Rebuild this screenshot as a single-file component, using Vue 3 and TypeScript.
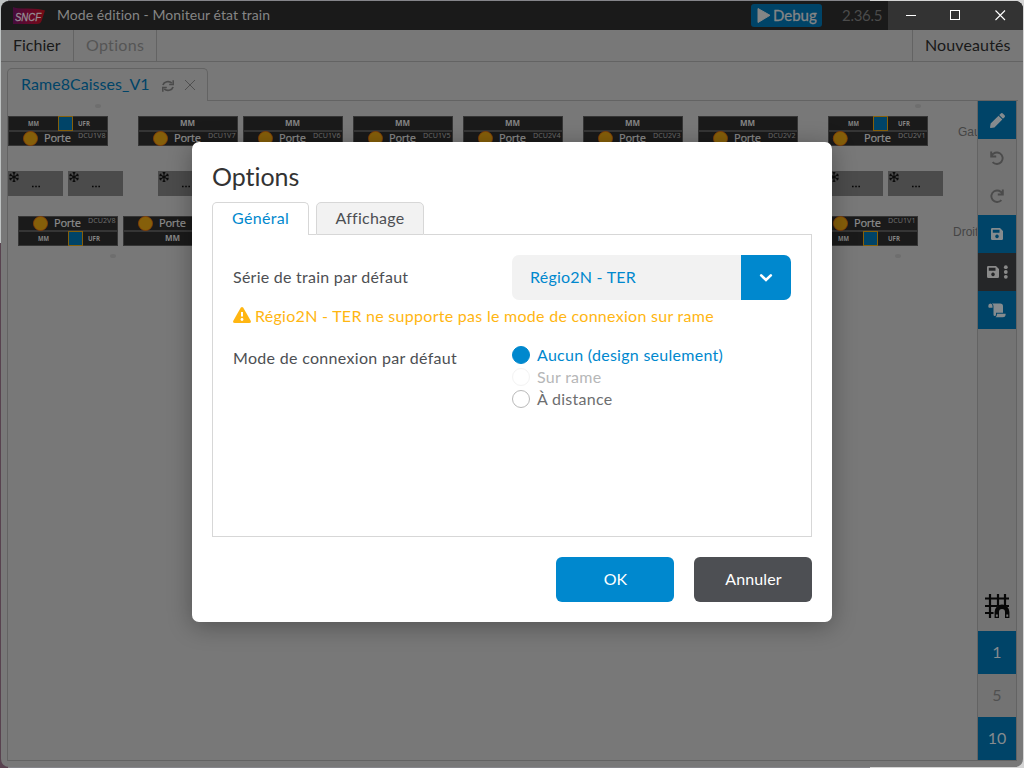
<script setup lang="ts">
import { ref } from 'vue'

interface Door { x: number; dcu: string; ufr?: boolean; bottom?: boolean; lamp?: number; box?: number }

const doors: Door[] = [
  { x: 8, dcu: 'DCU1V8', ufr: true },
  { x: 138, dcu: 'DCU1V7' },
  { x: 243, dcu: 'DCU1V6' },
  { x: 353, dcu: 'DCU1V5' },
  { x: 463, dcu: 'DCU2V4' },
  { x: 583, dcu: 'DCU2V3' },
  { x: 698, dcu: 'DCU2V2' },
  { x: 828, dcu: 'DCU2V1', ufr: true, lamp: 12.3, box: 45 },
  { x: 18, dcu: 'DCU2V8', ufr: true, bottom: true },
  { x: 123, dcu: 'DCU2V7', bottom: true },
  { x: 818, dcu: 'DCU1V1', ufr: true, bottom: true, box: 45 },
]
const coolers: number[] = [8, 68, 158, 828, 888]
const handles = [[98, 106], [918, 106], [113, 256], [898, 256]]
const modes = [
  { id: 'none', label: 'Aucun (design seulement)', disabled: false },
  { id: 'train', label: 'Sur rame', disabled: true },
  { id: 'remote', label: 'À distance', disabled: false },
]
const mode = ref('none')
</script>

<template>
  <div class="desktop">
    <div class="window">
      <header class="titlebar">
        <svg class="logo" width="32" height="17" viewBox="0 0 32 17">
          <defs>
            <linearGradient id="brand" x1="0" x2="1"><stop offset="0" stop-color="#450c3c" /><stop offset=".5" stop-color="#65082a" /><stop offset="1" stop-color="#740b12" /></linearGradient>
          </defs>
          <path d="M0 0 Q3 1.5 14 1.5 Q27 1.5 32 3.5 L28.5 14 Q27.5 17 24 17 L0 17Z" fill="url(#brand)" />
          <text x="2" y="14" textLength="26" lengthAdjust="spacingAndGlyphs" class="logo-text">SNCF</text>
        </svg>
        <span class="title">Mode édition - Moniteur état train</span>
        <span class="debug"><svg width="13" height="15" viewBox="0 0 13 15"><path d="M1 0.5L13 7.3L1 14.5Z" fill="#858585" stroke="#858585" stroke-linejoin="round" /></svg><span>Debug</span></span>
        <span class="version">2.36.5</span>
        <div class="controls">
          <svg width="134" height="29" viewBox="0 0 134 29" fill="none" stroke="#fff"><path d="M17 14.5H27" /><rect x="61.500" y="9.500" width="9" height="9" /><path d="M106.500 9.500L116 19M116 9.500L106.500 19" stroke-width="1.100" /></svg>
        </div>
      </header>
      <nav class="menu">
        <span class="m-file">Fichier</span><span class="m-opt">Options</span><span class="m-new">Nouveautés</span>
      </nav>
      <div class="tabs">
        <div class="tab">
          <span class="tab-name">Rame8Caisses_V1</span>
          <svg class="sync" width="12" height="12" viewBox="0 0 12 12" fill="none" stroke="#4a4a4a" stroke-width="1.700"><path d="M.9 5A5.200 4.600 0 0 1 9.800 3.200M11.100 7A5.200 4.600 0 0 1 2.200 8.800" /><path d="M11.200 .3V4.400H7.200M.8 11.700V7.600H4.800" stroke-width="1.500" /></svg>
          <svg class="close" width="12" height="12" viewBox="0 0 12 12" stroke="#505050"><path d="M1 1L11 11M11 1L1 11" /></svg>
        </div>
        <div class="tab-rest"></div>
      </div>
      <main class="workspace">
        <div class="canvas">
          <svg width="969" height="659" viewBox="8 101 969 659">
            <ellipse v-for="h in handles" :key="h.join()" :cx="h[0]" :cy="h[1]" rx="3" ry="2" fill="#6e6e6e" />
            <g v-for="d in doors" :key="d.dcu" :transform="`translate(${d.x} ${d.bottom ? 216 : 116})`">
              <rect x=".5" y=".5" width="99" height="29" class="unit" />
              <path d="M0 15H100" class="divider" />
              <g :transform="`translate(0 ${d.bottom ? 15 : 0})`">
                <template v-if="d.ufr">
                  <text x="20" y="10" textLength="11" lengthAdjust="spacingAndGlyphs" class="tag small">MM</text>
                  <rect :x="(d.box ?? 50) + .5" y=".5" width="14" height="14" class="ufr" />
                  <text x="70" y="10" textLength="12" lengthAdjust="spacingAndGlyphs" class="tag small">UFR</text>
                </template>
                <text v-else x="42" y="10.300" textLength="15" class="tag">MM</text>
              </g>
              <g :transform="`translate(0 ${d.bottom ? 0 : 15})`">
                <circle :cx="d.lamp ?? 22.5" cy="7.500" r="7" class="lamp" />
                <text x="36" y="11.300" textLength="27" class="door">Porte</text>
                <text x="70" y="7" textLength="27.500" class="dcu">{{ d.dcu }}</text>
              </g>
            </g>
            <g v-for="x in coolers" :key="x" :transform="`translate(${x} 171)`">
              <rect width="55" height="25" fill="#4b4b4b" />
              <g stroke="#0c0c0c" stroke-width="1.150" fill="none" transform="translate(6 6)">
                <g v-for="a in [0, 60, 120]" :key="a" :transform="`rotate(${a})`"><path d="M0 -5V5M-1.300 -4.600L0 -3.300L1.300 -4.600M-1.300 4.600L0 3.300L1.300 4.600" /></g>
              </g>
              <path d="M24 15.500h1.600M27.200 15.500h1.600M30.400 15.500h1.600" stroke="#080808" stroke-width="1.500" />
            </g>
            <text x="958" y="136" class="side">Gauche</text>
            <text x="953" y="236" class="side">Droite</text>
          </svg>
        </div>
        <aside class="toolbar">
          <div class="tool blue"><svg width="15" height="15" viewBox="0 0 512 512" fill="#858b8e"><path d="M498 142l-47 47c-5 5-12 5-17 0L323 78c-5-5-5-12 0-17l47-47c19-19 49-19 68 0l60 60c19 19 19 49 0 68zM283 101L22 362 1 484c-3 16 12 31 28 28l122-21 261-261c5-5 5-12 0-17L300 101c-5-5-12-5-17 0z" /></svg></div>
          <div class="tool"><svg width="14" height="14" viewBox="0 0 14 14" fill="none" stroke="#4b4b4b" stroke-width="1.900"><path d="M1.200 .5V5.500H6.200M1.500 5A5.800 5.800 0 1 1 2.600 11.200" /></svg></div>
          <div class="tool"><svg width="14" height="14" viewBox="0 0 14 14" fill="none" stroke="#4b4b4b" stroke-width="1.900"><path d="M12.800 .5V5.500H7.800M12.500 5A5.800 5.800 0 1 0 11.400 11.200" /></svg></div>
          <div class="tool blue"><svg width="12" height="12" viewBox="0 0 12 12"><path d="M1.300 0H9L12 3V10.700Q12 12 10.700 12H1.300Q0 12 0 10.700V1.300Q0 0 1.300 0ZM1.800 1.800V4.800H8.500V1.800ZM6 6.600A1.800 1.800 0 1 0 6.010 6.600Z" fill="#858b8e" fill-rule="evenodd" /></svg></div>
          <div class="tool dark"><svg width="21" height="14" viewBox="0 0 21 14"><path transform="translate(0 1)" d="M1.300 0H9L12 3V10.700Q12 12 10.700 12H1.300Q0 12 0 10.700V1.300Q0 0 1.300 0ZM1.800 1.800V4.800H8.500V1.800ZM6 6.600A1.800 1.800 0 1 0 6.010 6.600Z" fill="#8a8a8a" fill-rule="evenodd" /><g fill="#8a8a8a"><circle cx="18.800" cy="2.200" r="1.900" /><circle cx="18.800" cy="7" r="1.900" /><circle cx="18.800" cy="11.800" r="1.900" /></g></svg></div>
          <div class="tool blue"><svg width="18" height="15" viewBox="0 0 18 15" fill="#858b8e"><path d="M2.300 .5Q4.500 .5 4.500 3V4.800H1Q.3 4.800 .3 3Q.3 .5 2.300 .5ZM3.800 .5H12.200Q15 .5 15 3.300V9.800H8V11.500Q8 13 6.700 13Q5.500 13 5.500 11.500V3Q5.500 1.200 3.800 .5ZM9 10.800H17.700Q17.700 14.300 14.800 14.300H7.500Q9 13.300 9 10.800Z" /></svg></div>
          <div class="spacer"></div>
          <div class="grid-tool"><svg width="26" height="26" viewBox="0 0 26 26" fill="none" stroke="#070707"><path d="M6 1V25M14 1V12M21 1V12M1 5.500H25M1 13H25M1 20H11" stroke-width="2.200" /><path d="M12.800 24.500V19A5.700 5.700 0 0 1 23.200 19V24.500" stroke="#737373" stroke-width="6.500" /><path d="M12.800 25V19A5.200 5.200 0 0 1 23.200 19V25" stroke-width="4.400" /><path d="M11.900 22.700h1.900M22.300 22.700h1.900" stroke="#737373" stroke-width="2.200" /></svg></div>
          <div class="step blue">1</div><div class="step">5</div><div class="step blue">10</div>
        </aside>
      </main>
    </div>

    <section class="modal" role="dialog">
      <h1><span>Options</span></h1>
      <div class="mtabs">
        <button class="mtab active"><span>Général</span></button>
        <button class="mtab second"><span>Affichage</span></button>
        <div class="mrest"></div>
      </div>
      <div class="panel">
        <div class="row">
          <label class="l-serie">Série de train par défaut</label>
          <div class="select"><span class="value">Régio2N - TER</span><span class="arrow"><svg width="14" height="10" viewBox="0 0 14 10" fill="none" stroke="#fff" stroke-width="2.600" stroke-linecap="round"><path d="M2.200 2.400L7 7L11.800 2.400" /></svg></span></div>
        </div>
        <p class="warn"><svg width="18" height="16" viewBox="0 0 18 16"><path d="M7.700 .8Q9 -.8 10.300 .8L17.700 13.700Q18.500 16 16.200 16H1.800Q-.5 16 .3 13.700Z" fill="#ffb612" /><path d="M9 5V9.600" stroke="#fff" stroke-width="2" /><circle cx="9" cy="12.500" r="1.400" fill="#fff" /></svg><span>Régio2N - TER ne supporte pas le mode de connexion sur rame</span></p>
        <div class="row mode-row">
          <label class="l-mode">Mode de connexion par défaut</label>
          <div class="radios">
            <div v-for="m in modes" :key="m.id" class="radio" :class="[m.id, { checked: mode === m.id, disabled: m.disabled }]" @click="!m.disabled && (mode = m.id)">
              <i></i><span>{{ m.label }}</span>
            </div>
          </div>
        </div>
      </div>
      <footer><button class="ok">OK</button><button class="cancel">Annuler</button></footer>
    </section>
  </div>
</template>

<style>
body { margin: 0; overflow: hidden; }
</style>
<style scoped>
* { box-sizing: border-box; }
.desktop { width: 1024px; height: 768px; position: relative; overflow: hidden; padding: 1px; font-family: Lato, "Open Sans", sans-serif; font-size: 16px; background: linear-gradient(90deg, transparent 8px, #85858a 8px 870px, #d5d5d5 870px), linear-gradient(#bfc3c3 0 243px, #58424f 243px); }
.window { width: 1022px; height: 766px; background: #787878; border-radius: 8px; overflow: hidden; display: flex; flex-direction: column; }
.titlebar { height: 29px; background: #1a1a1a; display: flex; align-items: center; flex: none; color: #858585; }
.logo { margin-left: 12px; flex: none; }
.logo-text { font: italic 11.5px "Liberation Sans", sans-serif; fill: #969096; stroke: #969096; stroke-width: .3; }
.title { margin-left: 12px; width: 214px; font-size: 14px; letter-spacing: .06px; white-space: nowrap; padding-bottom: 2px; }
.debug { margin-left: 479px; width: 71px; height: 23px; background: #004468; border-radius: 3px; display: flex; align-items: center; padding-left: 6px; gap: 3px; font-size: 15px; flex: none; transform: translateX(1px); }
.debug span { padding-bottom: 2px; -webkit-text-stroke: .3px #858585; }
.version { width: 66px; padding: 0 0 2px 21px; color: #4b4b4b; font-size: 15px; letter-spacing: -.3px; flex: none; }
.controls { width: 135px; height: 29px; background: #333; margin-left: auto; padding-left: 1px; }
.controls svg { display: block; }
.menu { height: 32px; flex: none; border-bottom: 1px solid #636363; display: flex; line-height: 30px; color: #191919; }
.m-file { width: 73px; padding-left: 12px; border-right: 1px solid #636363; }
.m-opt { width: 83px; padding-left: 12px; border-right: 1px solid #636363; color: #555; letter-spacing: .3px; }
.m-new { margin-left: auto; width: 111px; padding-left: 12px; border-left: 1px solid #636363; letter-spacing: .12px; }
.tabs { height: 39px; flex: none; padding: 6px 5px 0 6px; display: flex; }
.tab { width: 201px; height: 33px; border: 1px solid #636363; border-bottom: 0; border-radius: 5px 5px 0 0; display: flex; align-items: center; padding-left: 13px; color: #004468; }
.tab-name { width: 141px; white-space: nowrap; padding-bottom: 3px; letter-spacing: .05px; }
.sync { margin: 2px 10px 0 0; }
.tab-rest { flex: 1; border-bottom: 1px solid #636363; }
.workspace { display: flex; flex: none; height: 660px; margin: 0 6px; border: 1px solid #636363; border-top: 0; width: 1010px; }
.canvas { width: 969px; overflow: hidden; flex: none; }
.canvas svg { display: block; }
.unit { fill: #1a1a1a; stroke: #353535; }
.divider { stroke: #353535; stroke-width: 2; }
.ufr { fill: #004468; stroke: #855f0a; }
.lamp { fill: #855f0a; stroke: #8a3f05; stroke-width: .8; }
.tag { font: bold 8px "Open Sans", sans-serif; fill: #858585; }
.tag.small { font-size: 7px; }
.door { font: 11px "Noto Sans", sans-serif; fill: #8b8b8b; stroke: #8b8b8b; stroke-width: .2; }
.dcu { font: 7.2px "Noto Sans", sans-serif; fill: #6c6c6c; }
.side { font: 12px "Liberation Sans", sans-serif; fill: #454545; }
.toolbar { width: 39px; flex: none; border-left: 1px solid #636363; background: #737373; display: flex; flex-direction: column; }
.tool { height: 38px; display: grid; place-items: center; flex: none; }
.blue { background: #004468; }
.tool.dark { background: #252628; }
.spacer { flex: 1; }
.grid-tool { height: 43px; padding: 5px 6px; }
.step { height: 43px; flex: none; line-height: 42px; text-align: center; color: #505050; }
.step.blue { color: #858b8e; }
.modal { position: absolute; left: 192px; top: 142px; width: 640px; height: 480px; background: #fff; border-radius: 7px; padding: 20px; box-shadow: 0 4px 24px rgba(0,0,0,.32); color: #4d4f53; }
h1 { margin: 0; height: 40px; line-height: 28px; font-size: 25px; font-weight: 400; color: #333; letter-spacing: -.05px; }
.mtabs { display: flex; height: 33px; position: relative; }
button { font: inherit; border: 0; padding: 0; color: inherit; }
.mtab { border: 1px solid #d7d7d7; border-radius: 5px 5px 0 0; padding-bottom: 2px; }
.mtab.active { width: 97px; background: #fff; color: #0088ce; border-bottom: 0; padding-bottom: 3px; letter-spacing: .3px; }
.mtab.second { width: 108px; margin-left: 7px; background: #f2f2f2; letter-spacing: .25px; }
.mrest { flex: 1; border-bottom: 1px solid #d7d7d7; }
.mtabs::after { content: ""; position: absolute; left: 97px; bottom: 0; width: 7px; height: 1px; background: #d7d7d7; }
.panel { height: 302px; border: 1px solid #d7d7d7; border-top: 0; padding: 20px; }
.row { display: grid; grid-template-columns: 279px 1fr; align-items: center; white-space: nowrap; }
.l-serie { letter-spacing: .25px; padding-bottom: 2px; }
.select { width: 279px; height: 45px; border-radius: 7px; background: #f2f2f2; overflow: hidden; display: flex; align-items: center; justify-content: space-between; color: #0088ce; padding-left: 18px; }
.value { letter-spacing: .23px; padding-bottom: 2px; }
.arrow { width: 50px; height: 45px; display: grid; place-items: center; background: #0088ce; }
.warn { margin: 5px 0 0; height: 24px; display: flex; align-items: center; gap: 4px; color: #ffb612; white-space: nowrap; letter-spacing: .28px; }
.warn svg { margin-bottom: 5px; flex: none; }
.warn span { padding-bottom: 4px; }
.mode-row { margin-top: 15px; align-items: start; }
.l-mode { line-height: 28px; letter-spacing: .31px; }
.radio { height: 22px; display: flex; align-items: center; gap: 7px; color: #6d6e70; letter-spacing: .28px; }
.radio span { padding-bottom: 2px; }
.radio i { width: 18px; height: 18px; border-radius: 50%; border: 1px solid #b9b9b9; }
.radio.checked { color: #0088ce; }
.checked i { background: #0088ce; border-color: #0088ce; }
.radio.disabled { color: #b6b7b8; }
.disabled i { border-color: #f3f3f3; }
footer { display: flex; justify-content: flex-end; gap: 20px; margin-top: 20px; color: #fff; }
footer button { width: 118px; height: 45px; border-radius: 6px; background: #0088ce; padding: 0 0 2px 1px; letter-spacing: .1px; }
footer .cancel { background: #4d4f53; }
</style>
